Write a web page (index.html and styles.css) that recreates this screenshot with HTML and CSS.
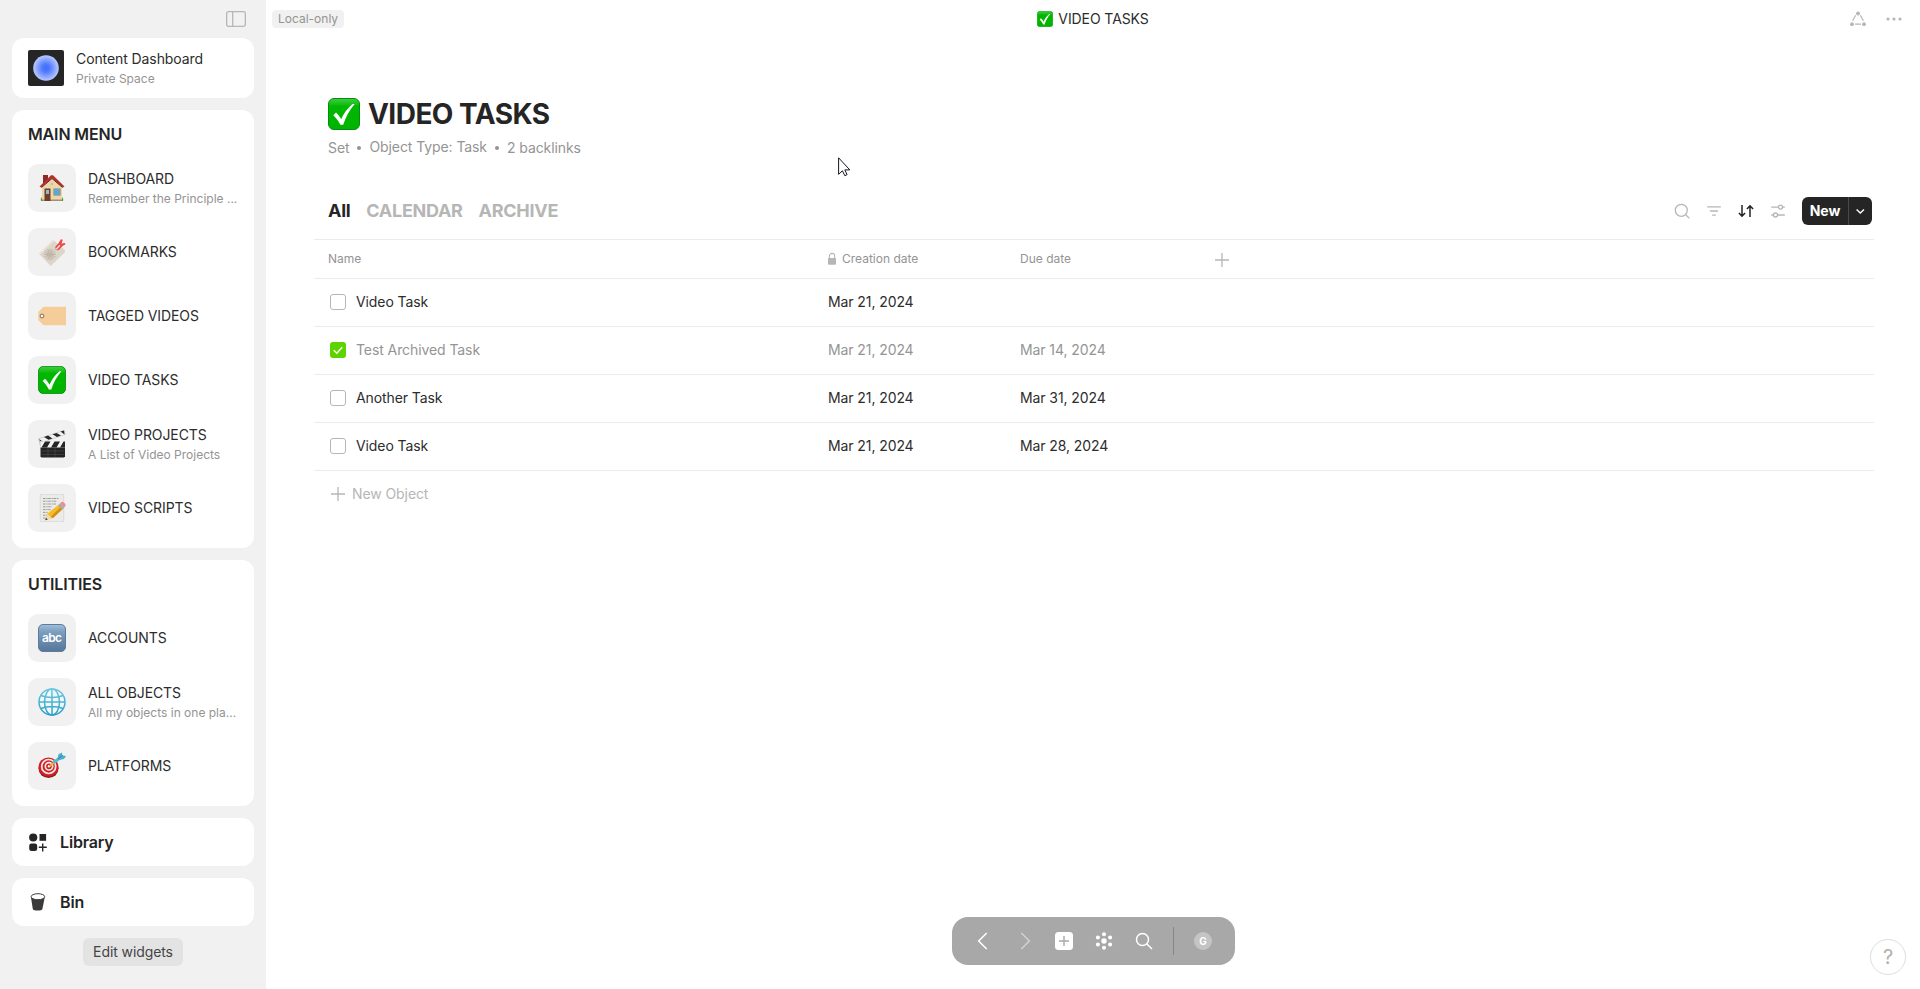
FILE: index.html
```html
<!DOCTYPE html>
<html lang="en">
<head>
<meta charset="utf-8">
<title>VIDEO TASKS</title>
<link rel="stylesheet" href="styles.css">
</head>
<body>
<svg class="defs" width="0" height="0" aria-hidden="true">
  <defs>
    <linearGradient id="green" x1="0" y1="0" x2="0" y2="1"><stop offset="0" stop-color="#3fcf3f"/><stop offset=".2" stop-color="#14bd14"/><stop offset=".24" stop-color="#00b800"/><stop offset="1" stop-color="#00b400"/></linearGradient>
    <linearGradient id="blue" x1="0" y1="0" x2="0" y2="1"><stop offset="0" stop-color="#a3bfd8"/><stop offset=".25" stop-color="#7d9fc0"/><stop offset="1" stop-color="#56769a"/></linearGradient>
    <linearGradient id="globe" x1="0" y1="0" x2="0" y2="1"><stop offset="0" stop-color="#6cc6dc"/><stop offset="1" stop-color="#2f9cc8"/></linearGradient>
    <radialGradient id="orb"><stop offset="0" stop-color="#3e6dff"/><stop offset=".3" stop-color="#4f7aff"/><stop offset="1" stop-color="#b9c8ff"/></radialGradient>
    <symbol id="check" viewBox="0 0 32 32"><rect x=".5" y=".5" width="31" height="31" rx="5.5" fill="url(#green)" stroke="#008f12"/><path d="M5.3 17.2 8 14.6c2 1.800 3.600 4 5.200 6.700C15.700 15.300 19.300 10.300 24.500 5.900h2.200C21.500 12 17.600 19 15.200 26.800h-2.800C10.700 23.300 8.300 20 5.300 17.200Z" fill="#fff"/></symbol>
  </defs>
</svg>
<div class="app">
  <aside class="sidebar">
    <div class="side-head"><svg width="20" height="16" viewBox="0 0 20 16" fill="none" stroke="#b6b6b6" stroke-width="1.300"><rect x=".65" y=".65" width="18.700" height="14.700" rx="1.800"/><path d="M6.700 1v14"/></svg></div>
    <section class="card space">
      <svg width="36" height="36"><rect width="36" height="36" rx="2" fill="#252525"/><circle cx="18" cy="18" r="12.800" fill="url(#orb)"/></svg>
      <div class="label"><div class="name">Content Dashboard</div><div class="sub">Private Space</div></div>
    </section>
    <section class="card list">
      <h2>MAIN MENU</h2>
      <div class="item"><span class="tile"><svg width="28" height="28"><path d="M3 27c-.8-2 .3-4 2-4l1 4ZM25 27c.8-2-.3-4-2-4l-1 4Z" fill="#4d9a32"/><path d="M5 1h5v8H5z" fill="#8b2c27"/><path d="M4 12 14 3l10 9v15H4Z" fill="#ecd7ad"/><path d="M4 25.500h20V27H4z" fill="#a58f70"/><path d="M1.500 12.500 13 1.200h2l11.500 11.300-1.700 1L14 4.200 3.200 13.500Z" fill="#b3302c"/><path d="M3.500 13.500 14 4.500l10.500 9" fill="none" stroke="#6d2422" stroke-width="1"/><path d="M6.500 14.500h6V27h-6z" fill="#713e2b"/><path d="M8 16h3v4H8z" fill="#8fbdcc"/><path d="M15.500 14.500h7v7h-7z" fill="#8b7762"/><path d="M16 15h6v6h-6z" fill="#5ea8cf"/><circle cx="14" cy="10" r="1.200" fill="#d2b889"/></svg></span><div class="label"><div class="name">DASHBOARD</div><div class="sub">Remember the Principle ...</div></div></div>
      <div class="item"><span class="tile"><svg width="28" height="28"><path d="M.8 15.500 15 1.800 27 12.300v2L12.700 28Z" fill="#ded5c9"/><path d="M.8 15.500 15 1.800l1.700.2L2 16.500Z" fill="#ece6de"/><g stroke="#beb5a8" stroke-width="1"><path d="M6 16.500h12M12 10.500v12M7.800 12.300l8.400 8.400M16.200 12.300l-8.400 8.400M6.500 14.200l11 4.600M9.700 11l4.600 11M14.300 11 9.700 22M17.500 14.200l-11 4.600"/></g><circle cx="19.500" cy="10" r="2.600" fill="#c4b8ac"/><path d="M17.500 10c-.3-2.600 3-3.300 5.300-8.800l2 .6-1.300 4 3.200-1 .8 1.800c-4 1-5.200 5.600-8 5.400Z" fill="#ee4b4b"/><path d="m18.500 10.800 3.400-3.500" stroke="#fff" stroke-width="1.200"/></svg></span><div class="label"><div class="name">BOOKMARKS</div></div></div>
      <div class="item"><span class="tile"><svg width="28" height="28"><path d="M5.500 5H27.500a.5.500 0 0 1 .5.500v17a.5.500 0 0 1-.5.500H5.500L.5 18V10Z" fill="#f5cd99" stroke="#f5cd99" stroke-width=".5" stroke-linejoin="round"/><circle cx="4" cy="14" r="1.900" fill="#fff" stroke="#86635a" stroke-width="1"/></svg></span><div class="label"><div class="name">TAGGED VIDEOS</div></div></div>
      <div class="item"><span class="tile"><svg width="28" height="28"><use href="#check"/></svg></span><div class="label"><div class="name">VIDEO TASKS</div></div></div>
      <div class="item"><span class="tile"><svg width="28" height="28"><path d="M.5 8.700 26 .4l1 4.200L2 13Z" fill="#f1f1f1" stroke="#b5b5b5" stroke-width=".5"/><path d="m6 7 4.500 2.700 4-1.300L10 5.600ZM14.500 4.200 19 7l4-1.400-4.500-2.700ZM22.500 1.500l4 3-.4-4ZM1 9l4 2.700-2.300 1Z" fill="#292929"/><path d="M1 10.500 6 12v6l-4-1.600Z" fill="#bdbdbd"/><path d="M2.500 11.500H27v6H2.500Z" fill="#f4f4f4"/><path d="m7 11.500-3.500 6H9l3.500-6Zm9.500 0-3.500 6h5.500l3.500-6Zm9 0-3.500 6h5v-6Z" fill="#252525"/><path d="M2.500 17.500H27v8.700l-1 1.300H3.600l-1.100-1.300Z" fill="#242424"/><path d="M3.500 21h22.800M3.500 24.500h22.800M10 18v9m7-9v9" stroke="#484848" stroke-width=".7"/></svg></span><div class="label"><div class="name">VIDEO PROJECTS</div><div class="sub">A List of Video Projects</div></div></div>
      <div class="item"><span class="tile"><svg width="28" height="28"><path d="M2.300.3h23.400v27.400H2.300z" fill="#ebebea" stroke="#cfcfcf" stroke-width=".6"/><path d="M5 4.500h16M5 7.200h14M5 10h13M5 12.800h9M5 15.600h8M5 18.400h5M5 21.200h4M5 24h4" stroke="#8e8e8e" stroke-width=".9" stroke-dasharray="2.500 .8 1.300 .6"/><path d="m7.500 26 2-6.500L21.500 10l4 4.200L15 24Z" fill="#f4bd27"/><path d="m12.500 23 11-10.900 2 2.100L15 24Z" fill="#d88e16"/><path d="m7.500 26 2-6 4.500 4.300Z" fill="#f4d9ad"/><path d="m7.200 26.300.8-2.500 1.700 1.700Z" fill="#373737"/><path d="m20 11.500 2-2 4 4.200-2 2Z" fill="#a3adb1"/><path d="m22 9.500 1.500-1.500c1.500-.8 4.600 2 4 3.800L26 13.700Z" fill="#ed8c91"/></svg></span><div class="label"><div class="name">VIDEO SCRIPTS</div></div></div>
    </section>
    <section class="card list">
      <h2>UTILITIES</h2>
      <div class="item"><span class="tile"><svg width="28" height="28"><rect x=".5" y=".5" width="27" height="27" rx="4.500" fill="url(#blue)" stroke="#5d7c9d"/><text class="abc" x="14" y="18" text-anchor="middle" textLength="20">abc</text></svg></span><div class="label"><div class="name">ACCOUNTS</div></div></div>
      <div class="item"><span class="tile"><svg width="28" height="28" fill="none" stroke="url(#globe)" stroke-width="1.500"><circle cx="14" cy="14" r="13" fill="#eff9fc"/><ellipse cx="14" cy="14" rx="7.500" ry="13"/><path d="M13.900 1l.2 26M1 13.900l26 .2M3 7.500c6 2.600 16 2.600 22 0M3 20.500c6-2.600 16-2.600 22 0"/></svg></span><div class="label"><div class="name">ALL OBJECTS</div><div class="sub">All my objects in one pla...</div></div></div>
      <div class="item"><span class="tile"><svg width="28" height="28"><ellipse cx="10.500" cy="16.600" rx="10" ry="9.400" fill="#8e1d20"/><ellipse cx="10.500" cy="15" rx="10" ry="9.600" fill="#cf2027"/><g fill="none" stroke="#f4e8e7" stroke-width="1.700"><circle cx="10.700" cy="14.500" r="7"/><circle cx="11" cy="14.300" r="3.700"/></g><circle cx="11" cy="14.300" r="1.200" fill="#fff"/><path d="m11.300 14.300 6-4.500" stroke="#e6b52d" stroke-width="2"/><path d="m15.500 10.800 6.500-5" stroke="#58b8d4" stroke-width="3"/><path d="m19.500 6.500 1-4.200L24 .5l.2 3.100L28 4 26 7.100l-4.600 1Z" fill="#4ab0ce"/><path d="m20 7 5-4" stroke="#257b9b" stroke-width=".8"/></svg></span><div class="label"><div class="name">PLATFORMS</div></div></div>
    </section>
    <section class="card link"><svg width="20" height="20" fill="#252525"><circle cx="5.200" cy="5.500" r="4.100"/><rect x="11.500" y="2" width="6.600" height="6.800"/><rect x="1.200" y="11.500" width="8" height="7.500" rx="2.300"/><path d="M14 11.500h1.400v3.100h3.400V16h-3.400v3.400H14V16h-3.200v-1.400H14Z"/></svg><span>Library</span></section>
    <section class="card link"><svg width="20" height="20"><path d="M3 5.500 4.800 17c.3 2 9.200 2 9.600 0L16.700 5.500" fill="#3a3a3a"/><ellipse cx="9.900" cy="4.700" rx="6.800" ry="3" fill="#fff" stroke="#3a3a3a" stroke-width="1"/></svg><span>Bin</span></section>
    <button class="edit">Edit widgets</button>
  </aside>

  <main class="main">
    <header class="topbar">
      <div class="sync">Local-only</div>
      <div class="crumb"><svg width="16" height="16"><use href="#check"/></svg><span>VIDEO TASKS</span></div>
      <div class="top-icons">
        <svg width="18" height="16" fill="#b6b6b6" stroke="#b6b6b6" stroke-width="1.200"><path d="M6.700 4.300 3.600 9.800M11.300 4.300l3.100 5.500M6 13.200h6" fill="none"/><g stroke="none"><circle cx="9" cy="2.500" r="1.900"/><circle cx="3" cy="13.200" r="1.900"/><circle cx="15" cy="13.200" r="1.900"/></g></svg>
        <svg width="18" height="16" fill="#b6b6b6"><circle cx="3" cy="8" r="1.600"/><circle cx="9" cy="8" r="1.600"/><circle cx="15" cy="8" r="1.600"/></svg>
      </div>
    </header>
    <div class="page">
      <div class="heading"><svg width="32" height="32"><use href="#check"/></svg><h1>VIDEO TASKS</h1></div>
      <div class="featured"><span>Set</span><i></i><span class="type">Object Type: Task</span><i></i><span>2 backlinks</span></div>
      <div class="controls">
        <nav class="tabs"><span class="active">All</span><span>CALENDAR</span><span>ARCHIVE</span></nav>
        <div class="tools">
          <svg width="20" height="20" fill="none" stroke="#b6b6b6" stroke-width="1.250"><circle cx="9.300" cy="9.300" r="6"/><path d="m13.700 13.700 3.700 3.700"/></svg>
          <svg width="20" height="20" fill="none" stroke="#b6b6b6" stroke-width="1.300" stroke-linecap="round"><path d="M3.600 5.800h12.800M6.500 10h7M8.700 14.200h2.600"/></svg>
          <svg width="20" height="20" fill="none" stroke="#252525" stroke-width="1.500"><path d="M6 4v11M2.900 12 6 15.100 9.100 12M14 16V5M10.900 8 14 4.900 17.100 8"/></svg>
          <svg width="20" height="20" fill="none" stroke="#b6b6b6" stroke-width="1.300"><path d="M3.200 6.100h7.200M14.600 6.100h2.200M3.200 14h2.200M9.600 14h7.200"/><circle cx="12.500" cy="6.100" r="2"/><circle cx="7.500" cy="14" r="2"/></svg>
          <div class="new"><span>New</span><b><svg width="12" height="12" fill="none" stroke="#fff" stroke-width="1.400"><path d="m1.600 4.500 3.700 3.500L9 4.500"/></svg></b></div>
        </div>
      </div>
      <div class="table">
        <div class="row head"><div>Name</div><div class="created"><svg width="8" height="14"><path d="M1.400 7V4.200c0-3.800 5.200-3.800 5.200 0V7" fill="none" stroke="#b6b6b6" stroke-width="1.100"/><rect y="6" width="8" height="6.800" rx="1" fill="#b6b6b6"/></svg><span>Creation date</span></div><div>Due date</div><div class="add"><svg width="16" height="16" stroke="#b6b6b6" stroke-width="1.300"><path d="M8 1v14M1 8h14"/></svg></div></div>
        <div class="row"><div class="task"><i class="box"></i>Video Task</div><div>Mar 21, 2024</div><div></div></div>
        <div class="row done"><div class="task"><i class="box on"><svg width="16" height="16" fill="none" stroke="#fff" stroke-width="1.400"><path d="m3.800 8.200 3 3 5.400-6"/></svg></i>Test Archived Task</div><div>Mar 21, 2024</div><div>Mar 14, 2024</div></div>
        <div class="row"><div class="task"><i class="box"></i>Another Task</div><div>Mar 21, 2024</div><div>Mar 31, 2024</div></div>
        <div class="row"><div class="task"><i class="box"></i>Video Task</div><div>Mar 21, 2024</div><div>Mar 28, 2024</div></div>
        <div class="new-object"><svg width="16" height="16" stroke="#b6b6b6" stroke-width="1.300"><path d="M8 1v14M1 8h14"/></svg>New Object</div>
      </div>
    </div>
  </main>

  <nav class="dock">
    <svg width="20" height="20" fill="none" stroke="#fff" stroke-width="1.500"><path d="M14.700 2 6.700 10l8 8"/></svg>
    <svg class="forward" width="20" height="20" fill="none" stroke="#d2d2d2" stroke-width="1.500"><path d="m6.300 2 8 8-8 8"/></svg>
    <svg width="20" height="20"><rect x="1" y="1" width="18" height="18" rx="3.500" fill="#fff"/><path d="M10 5v10M5 10h10" stroke="#a8a8a8" stroke-width="1.400"/></svg>
    <svg width="20" height="20" fill="#fff"><circle cx="10" cy="10" r="2.700"/><circle cx="10" cy="3.300" r="2"/><circle cx="10" cy="16.700" r="2"/><circle cx="3.900" cy="6.600" r="2"/><circle cx="16.100" cy="6.600" r="2"/><circle cx="3.900" cy="13.400" r="2"/><circle cx="16.100" cy="13.400" r="2"/></svg>
    <svg width="20" height="20" fill="none" stroke="#fff" stroke-width="1.500"><circle cx="8.500" cy="8.500" r="6"/><path d="m13 13 5 5"/></svg>
    <i></i>
    <span class="avatar">G</span>
  </nav>
  <div class="help">?</div>
  <svg class="cursor" width="14" height="21" viewBox="0 0 14 21"><path d="M.6.8v16.500l3.800-3.500 2.400 4.900 2.300-1.100-2.300-4.700h5L.6.8Z" fill="#fff" stroke="#151520" stroke-width="1"/></svg>
</div>
</body>
</html>
```
FILE: styles.css
```css
* { box-sizing: border-box; }
body { margin: 0; font: 14px/22px Inter, "Liberation Sans", sans-serif; letter-spacing: -.09px; color: #2c2c2c; background: #fff; }
h1, h2 { margin: 0; color: #252525; }
svg { display: block; flex: none; }
.defs { position: absolute; }
.app { display: flex; height: 989px; position: relative; overflow: hidden; }

.sidebar { width: 266px; flex: none; background: #f1f1f1; padding: 0 12px; display: flex; flex-direction: column; gap: 12px; }
.side-head { height: 38px; margin-bottom: -12px; padding: 11px 8px 0 0; display: flex; justify-content: flex-end; }
.card { background: #fff; border-radius: 12px; flex: none; }
.space { height: 60px; padding: 0 16px; display: flex; align-items: center; gap: 12px; }
.label { min-width: 0; }
.name { line-height: 20px; white-space: nowrap; }
.sub { margin-bottom: -2px; font-size: 12px; line-height: 20px; letter-spacing: 0; color: #949494; white-space: nowrap; }
.list { padding: 0 16px 8px; }
.list h2 { height: 46px; padding-top: 13px; font-size: 16px; line-height: 22px; font-weight: 600; letter-spacing: -.14px; }
.item { height: 64px; display: flex; align-items: center; gap: 12px; }
.tile { width: 48px; height: 48px; flex: none; border-radius: 10px; background: #f1f1f1; display: grid; place-items: center; }
.abc { font: 600 12px Inter, sans-serif; fill: #fff; }
.link { height: 48px; padding: 0 16px; display: flex; align-items: center; gap: 12px; font-size: 16px; font-weight: 600; letter-spacing: -.16px; color: #252525; }
.edit { align-self: center; width: 100px; height: 28px; border: 0; border-radius: 6px; padding: 0; background: #e3e3e3; color: #444; font: inherit; letter-spacing: inherit; }

.main { flex: 1; min-width: 0; }
.topbar { height: 38px; padding: 0 14px 0 6px; display: grid; grid-template-columns: 1fr auto 1fr; align-items: center; }
.sync { justify-self: start; height: 18px; padding: 0 6px; border-radius: 4px; background: #f1f1f1; color: #949494; font-size: 12px; line-height: 18px; letter-spacing: 0; }
.crumb { display: flex; align-items: center; gap: 5px; padding-left: 8px; }
.top-icons { justify-self: end; display: flex; gap: 18px; padding-right: 3px; }
.page { padding: 60px 46px 0 48px; }
.heading { height: 32px; padding-left: 14px; display: flex; align-items: center; gap: 8px; }
.heading h1 { font-size: 28px; line-height: 32px; font-weight: 700; letter-spacing: -.53px; }
.featured { margin-top: 7px; padding-left: 14px; height: 22px; display: flex; align-items: center; color: #949494; }
.featured i { width: 4px; height: 4px; border-radius: 2px; background: #949494; margin: 0 8px; }
.featured .type { padding-bottom: 2px; }
.controls { height: 80px; padding: 38px 2px 0 14px; display: flex; justify-content: space-between; align-items: flex-start; }
.tabs { display: flex; gap: 16px; font-size: 18px; line-height: 28px; font-weight: 700; letter-spacing: -.29px; color: #b6b6b6; }
.tabs .active { color: #252525; }
.tools { display: flex; align-items: center; gap: 12px; }
.new { width: 70px; height: 28px; margin-left: 2px; border-radius: 6px; display: flex; background: #252525; color: #fff; font-weight: 700; line-height: 28px; }
.new span { width: 46px; text-align: center; }
.new b { width: 24px; border-left: 1px solid #494949; display: grid; place-items: center; }
.table { border-top: 1px solid #ebebeb; }
.row { height: 48px; padding-bottom: 1px; border-bottom: 1px solid #ebebeb; display: grid; grid-template-columns: 500px 192px 192px 1fr; align-items: center; }
.row > div { padding-left: 14px; }
.row.head { height: 39px; padding-bottom: 0; font-size: 12px; letter-spacing: 0; color: #949494; }
.created { display: flex; align-items: center; gap: 6px; }
.row .add { padding: 2px 0 0 16px; }
.task { display: flex; align-items: center; gap: 10px; }
.box { width: 16px; height: 16px; margin-left: 2px; border: 1px solid #b6b6b6; border-radius: 3px; }
.box.on { border: 0; background: #5dd400; }
.done { color: #949494; }
.new-object { height: 46px; padding-left: 16px; display: flex; align-items: center; gap: 6px; color: #b6b6b6; }

.dock { position: absolute; left: 952px; top: 917px; width: 283px; height: 48px; padding: 0 23px 0 20px; border-radius: 16px; background: #a8a8a8; display: flex; align-items: center; gap: 20px; }
.dock .forward { margin-left: 3px; margin-right: -1px; }
.dock i { width: 1px; height: 28px; margin-left: -1px; background: #878787; }
.avatar { width: 18px; height: 18px; border-radius: 50%; background: #c4c4c4; color: #fff; font: 700 10px/18px Inter, sans-serif; text-align: center; }
.help { position: absolute; left: 1870px; top: 939px; width: 36px; height: 36px; border: 1px solid #dedede; border-radius: 50%; color: #b0b0b0; font-size: 20px; line-height: 34px; text-align: center; }
.cursor { position: absolute; left: 838px; top: 157px; }
```
